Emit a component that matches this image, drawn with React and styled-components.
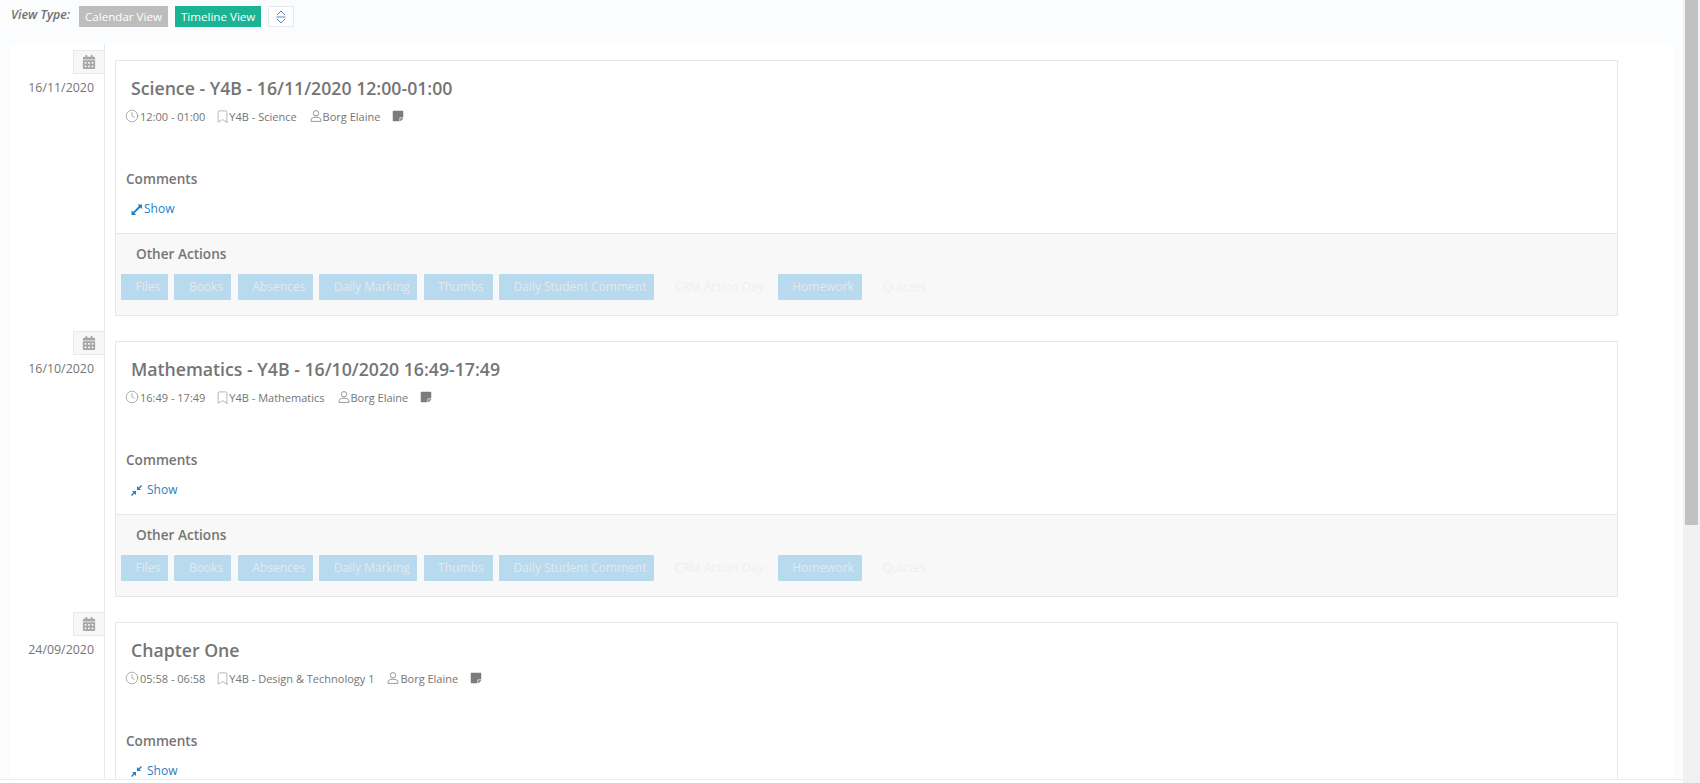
import React from 'react'
import styled, { createGlobalStyle } from 'styled-components'
import { FaCalendarAlt, FaStickyNote } from 'react-icons/fa'
import { Clock, Bookmark } from 'lucide-react'

const GlobalStyle = createGlobalStyle`
  html, body { margin: 0; padding: 0; height: 100%; overflow: hidden; }
  body {
    font-family: "Open Sans", "Liberation Sans", sans-serif;
    color: #757575;
    background: #fff;
  }
`

const actions = [
  { label: 'Files', width: 47 },
  { label: 'Books', width: 57 },
  { label: 'Absences', width: 75 },
  { label: 'Daily Marking', width: 98 },
  { label: 'Thumbs', width: 69 },
  { label: 'Daily Student Comment', width: 155 },
  { label: 'CRM Action Day', width: 111, off: true },
  { label: 'Homework', width: 84 },
  { label: 'Quizzes', width: 73, off: true },
]

// the third card runs off the bottom of the window before its footer starts
const lessons = [
  { date: '16/11/2020', title: 'Science - Y4B - 16/11/2020 12:00-01:00', time: '12:00 - 01:00', group: 'Y4B - Science', open: true, footer: true },
  { date: '16/10/2020', title: 'Mathematics - Y4B - 16/10/2020 16:49-17:49', time: '16:49 - 17:49', group: 'Y4B - Mathematics', footer: true },
  { date: '24/09/2020', title: 'Chapter One', time: '05:58 - 06:58', group: 'Y4B - Design & Technology 1' },
]

const ExpandIcon = () => (
  <svg width="13" height="13" viewBox="0 0 13 13" fill="#1f7fc4">
    <path d="M7.5 1.5h4.5v4.5l-1.6-1.6-5.9 5.9 1.6 1.6h-4.6v-4.6l1.6 1.6 5.9-5.9z" />
  </svg>
)

const CompressIcon = () => (
  <svg width="13" height="13" viewBox="0 0 13 13" fill="#1f7fc4">
    <path d="M7 2v4h4l-1.5-1.5 2.5-2.5-1-1-2.5 2.5zM6 11V7H2l1.5 1.5-2.5 2.5 1 1 2.5-2.5z" />
  </svg>
)

const SortIcon = () => (
  <svg width="10" height="14" viewBox="0 0 10 14" fill="none" stroke="#5b84c9" strokeWidth="1">
    <path d="M1 5l4-4 4 4M1 9l4 4 4-4M0.5 7h9" />
  </svg>
)

const PersonIcon = () => (
  <svg width="12" height="12" viewBox="0 0 12 12" fill="none" stroke="#8f8f8f" strokeWidth="0.9">
    <circle cx="6" cy="3.3" r="2.7" />
    <path d="M1 11.4v-1.2c0-1.8 1.6-3 5-3s5 1.2 5 3v1.2z" />
  </svg>
)

const App = () => (
  <Page>
    <GlobalStyle />
    <Main>
      <Toolbar>
        <ViewLabel>View Type:</ViewLabel>
        <ViewButton>Calendar View</ViewButton>
        <ViewButton $active>Timeline View</ViewButton>
        <ToggleButton><SortIcon /></ToggleButton>
      </Toolbar>
      <Panel>
        {lessons.map((lesson) => (
          <Row key={lesson.date}>
            <DateColumn>
              <CalendarBadge><FaCalendarAlt /></CalendarBadge>
              <DateText>{lesson.date}</DateText>
            </DateColumn>
            <Card>
              <CardBody>
                <Title>{lesson.title}</Title>
                <Meta>
                  <MetaItem><ClockGlyph size={14} strokeWidth={1.1} />{lesson.time}</MetaItem>
                  <MetaItem><BookmarkGlyph size={15} strokeWidth={1} />{lesson.group}</MetaItem>
                  <PersonItem><PersonIcon />Borg Elaine</PersonItem>
                  <NoteIcon><FaStickyNote /></NoteIcon>
                </Meta>
                <SectionTitle>Comments</SectionTitle>
                <ShowLink $open={lesson.open}>
                  {lesson.open ? <ExpandIcon /> : <CompressIcon />}
                  Show
                </ShowLink>
              </CardBody>
              {lesson.footer && (
                <CardFooter>
                  <FooterTitle>Other Actions</FooterTitle>
                  <ActionRow>
                    {actions.map((action) => (
                      <ActionButton key={action.label} $width={action.width} $off={action.off}>
                        {action.label}
                      </ActionButton>
                    ))}
                  </ActionRow>
                </CardFooter>
              )}
            </Card>
          </Row>
        ))}
      </Panel>
      <BottomEdge />
    </Main>
    <Scrollbar>
      <ScrollThumb />
    </Scrollbar>
  </Page>
)

export default App

const Page = styled.div`
  display: flex;
  width: 1700px;
  height: 783px;
  overflow: hidden;
`

const Main = styled.div`
  width: 1683px;
  height: 783px;
  display: flex;
  flex-direction: column;
  background: #fbfcfe;
`

const Toolbar = styled.div`
  height: 44px;
  flex: none;
  display: flex;
  align-items: flex-start;
  padding: 6px 0 0 11px;
  box-sizing: border-box;
`

const ViewLabel = styled.span`
  font-size: 12.4px;
  line-height: 18px;
  font-weight: 600;
  font-style: italic;
  color: #707070;
  width: 68px;
`

const ViewButton = styled.button`
  height: 21px;
  margin: 0 7px 0 0;
  padding: 0 6px;
  border: 0;
  font-family: inherit;
  font-size: 11.6px;
  color: #fff;
  background: ${(p) => (p.$active ? '#1ab394' : '#bdbdbd')};
`

const ToggleButton = styled.button`
  width: 26px;
  height: 21px;
  padding: 0;
  display: flex;
  align-items: center;
  justify-content: center;
  background: #fff;
  border: 1px solid #e7eaec;
`

const Panel = styled.div`
  flex: 1;
  min-height: 0;
  width: 1663px;
  margin-left: 10px;
  background: #fff;
  overflow: hidden;
`

const BottomEdge = styled.div`
  height: 4px;
  flex: none;
  background: #fff;
  border-top: 1px solid #eeeeee;
  box-sizing: border-box;
`

const Row = styled.div`
  height: 281px;
  display: flex;
`

const DateColumn = styled.div`
  width: 95px;
  box-sizing: border-box;
  border-right: 1px solid #e7eaec;
  padding-top: 6px;
  display: flex;
  flex-direction: column;
  align-items: flex-end;
`

const CalendarBadge = styled.div`
  width: 31px;
  height: 24px;
  box-sizing: border-box;
  background: #f7f7f7;
  border: 1px solid #e9e9e9;
  border-right: 0;
  display: flex;
  justify-content: center;
  padding-top: 4px;
  color: #a5a5a5;
  font-size: 14px;
`

const DateText = styled.div`
  margin: 5px 10px 0 0;
  font-size: 12.4px;
  line-height: 18px;
  color: #757575;
`

const Card = styled.div`
  width: 1503px;
  height: 256px;
  margin: 16px 0 0 10px;
  box-sizing: border-box;
  border: 1px solid #e7e7e7;
  display: flex;
  flex-direction: column;
`

const CardBody = styled.div`
  height: 172px;
  flex: none;
  box-sizing: border-box;
  padding: 15px 0 0 10px;
`

const Title = styled.h2`
  margin: 0 0 0 5px;
  font-size: 17.7px;
  line-height: 25px;
  font-weight: 600;
  color: #757575;
`

const Meta = styled.div`
  margin-top: 7px;
  display: flex;
  align-items: center;
  height: 16px;
  font-size: 11px;
  color: #757575;
`

const MetaItem = styled.span`
  display: inline-flex;
  align-items: center;
  gap: 2px;
  margin-right: 13px;
`

const PersonItem = styled(MetaItem)`
  gap: 1px;
  margin-right: 12px;
`

const ClockGlyph = styled(Clock)`
  color: #858585;
  margin-left: -1px;
  margin-right: -1px;
`

const BookmarkGlyph = styled(Bookmark)`
  color: #8f8f8f;
  margin-left: -3px;
  margin-right: -3px;
`

const NoteIcon = styled.span`
  display: inline-flex;
  font-size: 12px;
  color: #7d7a80;
`

const SectionTitle = styled.h3`
  margin: 45px 0 0;
  font-size: 13.6px;
  line-height: 20px;
  font-weight: 600;
  color: #757575;
`

const ShowLink = styled.a`
  display: inline-flex;
  align-items: center;
  gap: ${(p) => (p.$open ? '1px' : '4px')};
  margin: 11px 0 0 4px;
  font-size: 12px;
  line-height: 18px;
  color: #2a80c4;
`

const CardFooter = styled.div`
  flex: 1;
  background: #f8f8f8;
  border-top: 1px solid #e7e7e7;
  padding: 10px 0 0 5px;
`

const FooterTitle = styled.div`
  margin-left: 15px;
  font-size: 13.6px;
  line-height: 20px;
  font-weight: 600;
  color: #757575;
`

const ActionRow = styled.div`
  display: flex;
  gap: 6.4px;
  margin-top: 10px;
`

const ActionButton = styled.span`
  width: ${(p) => p.$width}px;
  height: 26px;
  box-sizing: border-box;
  padding-left: 14.5px;
  border-radius: 1px;
  font-size: 12px;
  line-height: 26px;
  white-space: nowrap;
  color: ${(p) => (p.$off ? '#efefef' : '#e4e8ea')};
  background: ${(p) => (p.$off ? 'transparent' : '#b8daef')};
`

const Scrollbar = styled.div`
  width: 17px;
  height: 783px;
  background: #f1f1f1;
  padding-left: 2px;
  box-sizing: border-box;
`

const ScrollThumb = styled.div`
  width: 13px;
  height: 525px;
  background: #c1c1c1;
`
